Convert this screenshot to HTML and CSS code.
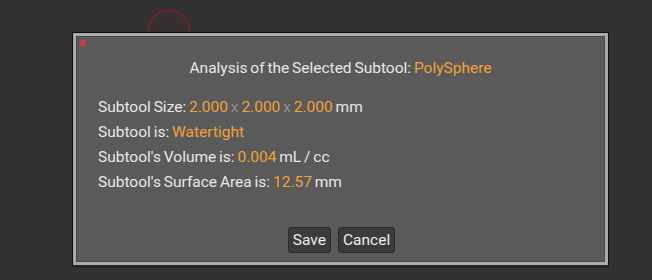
FILE: index.html
```html
<!DOCTYPE html>
<html>
<head>
<meta charset="utf-8">
<link rel="stylesheet" href="styles.css">
</head>
<body>
<div class="stage">
  <svg class="rings" width="60" height="60" viewBox="0 0 60 60">
    <circle cx="30" cy="30" r="20.5" fill="none" stroke="#74242a" stroke-width="2"/>
    <circle cx="30" cy="30" r="11.5" fill="none" stroke="#52252a" stroke-width="2"/>
  </svg>
  <div class="dialog">
    <div class="frame">
      <div class="panel">
        <span class="dot"></span>
        <div class="title">Analysis of the Selected Subtool: <span class="hl">PolySphere</span></div>
        <div class="rows">
          <div class="row">Subtool Size: <span class="hl">2.000</span> <span class="x">x</span> <span class="hl">2.000</span> <span class="x">x</span> <span class="hl">2.000</span> mm</div>
          <div class="row">Subtool is: <span class="hl">Watertight</span></div>
          <div class="row">Subtool's Volume is: <span class="hl">0.004</span> mL / cc</div>
          <div class="row">Subtool's Surface Area is: <span class="hl">12.57</span> mm</div>
        </div>
        <div class="buttons">
          <button class="btn">Save</button>
          <button class="btn">Cancel</button>
        </div>
      </div>
    </div>
  </div>
</div>
</body>
</html>
```
FILE: styles.css
```css
html, body {
  margin: 0;
  padding: 0;
  background: #323232;
  width: 652px;
  height: 280px;
  overflow: hidden;
}
.stage {
  position: relative;
  width: 652px;
  height: 280px;
  padding-top: 32px;
  box-sizing: border-box;
  font-family: "Roboto", "Open Sans", sans-serif;
}
.rings {
  position: absolute;
  left: 139px;
  top: 1px;
}
.dialog {
  position: relative;
  margin-left: 72px;
  width: 537px;
  height: 233px;
  box-sizing: border-box;
  border: 1px solid #0c0c0c;
  border-bottom: none;
  background: #a9a9a9;
  padding: 3px 3px 3px 3px;
  box-shadow: 0 3px 0 #262626;
}
.frame {
  height: 100%;
  box-sizing: border-box;
  border: 1px solid #4a4a4a;
}
.panel {
  position: relative;
  height: 100%;
  box-sizing: border-box;
  background: #5a5a5a;
  color: #e8e8e8;
  font-size: 15.5px;
  word-spacing: -1px;
  padding: 21px 0 0 21px;
  display: flex;
  flex-direction: column;
}
.dot {
  position: absolute;
  left: 3px;
  top: 3px;
  width: 6px;
  height: 6px;
  background: #cf3a42;
}
.title {
  text-align: center;
  margin-right: 21px;
  line-height: 20px;
}
.hl { color: #f2a137; }
.x { color: #8e8e8e; }
.rows {
  margin-top: 17px;
  display: flex;
  flex-direction: column;
}
.row {
  line-height: 25px;
}
.buttons {
  margin-top: auto;
  margin-bottom: 8px;
  display: flex;
  justify-content: center;
  gap: 7px;
  margin-right: 21px;
  padding-left: 2px;
}
.btn {
  font-family: inherit;
  font-size: 15.5px;
  color: #ececec;
  background: #3b3b3b;
  border: 1px solid #2a2a2a;
  border-radius: 3px;
  height: 26px;
  padding: 0 4px;
  line-height: 24px;
}
```
